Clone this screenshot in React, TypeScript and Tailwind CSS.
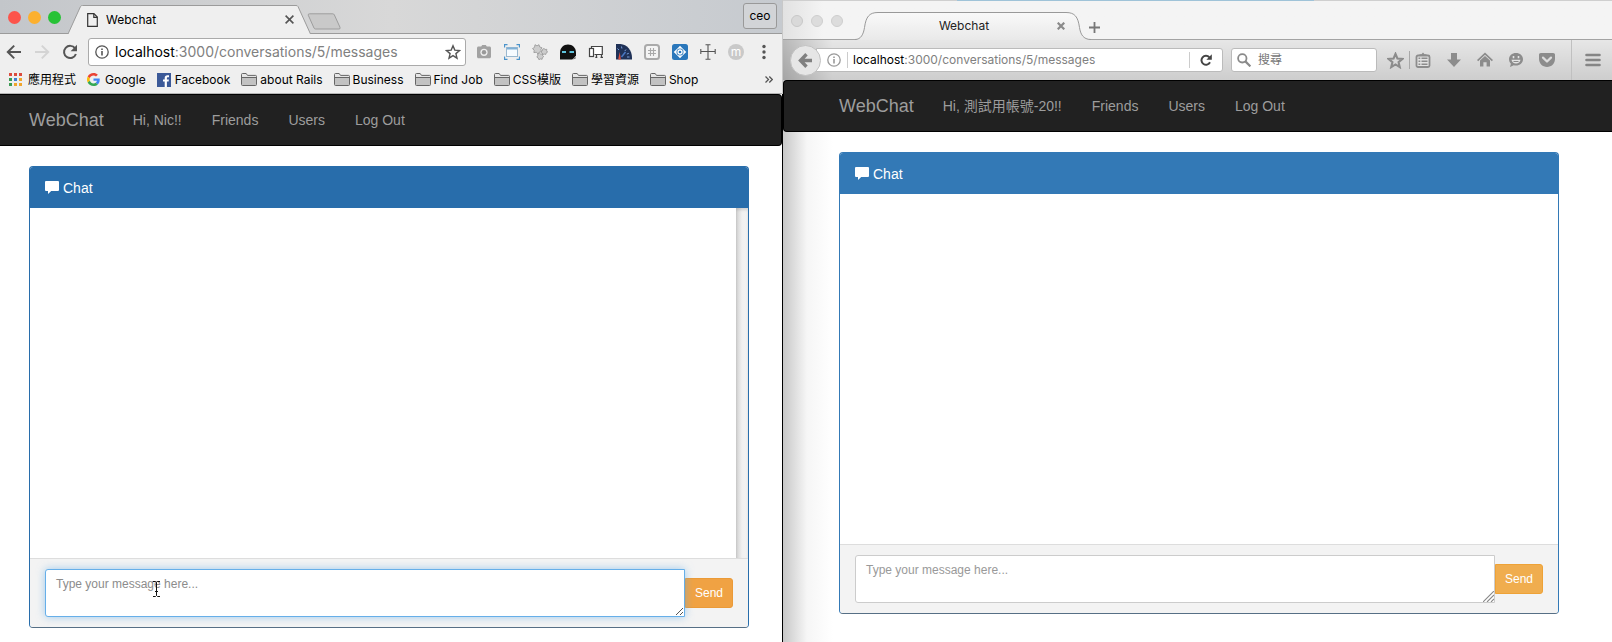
import React from "react";

type IconProps = { className?: string };

/* ---------- Chrome icons ---------- */

const PageIcon = () => (
  <svg className="h-[14px] w-[11px]" viewBox="0 0 11 14" fill="none" stroke="#333" strokeWidth="1.2">
    <path d="M.7.7h6.2l3.4 3.4v9.2H.7z" />
    <path d="M6.8.8v3.5h3.4" />
  </svg>
);

const ArrowLeft = () => (
  <svg className="h-4 w-4" viewBox="0 0 16 16" fill="none" stroke="#555" strokeWidth="2">
    <path d="M15 8H2.2M8.2 1.6 1.8 8l6.4 6.4" />
  </svg>
);

const ArrowRight = () => (
  <svg className="h-4 w-4" viewBox="0 0 16 16" fill="none" stroke="#d4d4d4" strokeWidth="2">
    <path d="M1 8h12.8M7.8 1.6 14.2 8l-6.4 6.4" />
  </svg>
);

const ChromeReload = () => (
  <svg className="h-4 w-4" viewBox="0 0 16 16">
    <path d="M13.1 4.4A6.1 6.1 0 1 0 13.9 10" fill="none" stroke="#555" strokeWidth="2" />
    <path d="M15 .8v6.4H8.6z" fill="#555" />
  </svg>
);

const InfoIcon = ({ className }: IconProps) => (
  <svg className={className} viewBox="0 0 14 14" fill="none" stroke="currentColor">
    <circle cx="7" cy="7" r="6.2" strokeWidth="1.3" />
    <path d="M7 6v4.4M7 3.4v1.5" strokeWidth="1.6" />
  </svg>
);

const StarIcon = ({ className }: IconProps) => (
  <svg className={className} viewBox="0 0 16 16" fill="none" stroke="currentColor" strokeLinejoin="miter">
    <path d="m8 1.8 1.8 4.3 4.7.4-3.6 3.1 1.1 4.6L8 11.7l-4 2.5 1.1-4.6L1.500 6.500l4.700-.4z" />
  </svg>
);

const CameraIcon = () => (
  <svg className="h-4 w-4" viewBox="0 0 16 16">
    <path d="M5.200 2.400 6.200 1h3.600l1 1.400h2.700c.8 0 1.500.7 1.500 1.500v8.800c0 .8-.7 1.500-1.500 1.500h-11c-.8 0-1.500-.7-1.500-1.500V3.900c0-.8.7-1.500 1.500-1.500z" fill="#a2a2a2" />
    <circle cx="8" cy="8.300" r="3.600" fill="#eee" />
    <circle cx="8" cy="8.300" r="2.200" fill="#999" />
  </svg>
);

const ResizeIcon = () => (
  <svg className="h-4 w-4" viewBox="0 0 16 16" fill="none">
    <rect x="2.500" y="3.500" width="11" height="9" fill="#f6fbff" stroke="#9ab8cf" />
    <path d="M3 4.500h10" stroke="#7fb0d6" strokeWidth="2" />
    <path d="M.5 3.500v-3h3M12.500.5h3v3M15.500 12.500v3h-3M3.500 15.500h-3v-3" stroke="#4a93cb" strokeWidth="1.300" />
  </svg>
);

const GearsIcon = () => (
  <svg className="h-4 w-4" viewBox="0 0 16 16" fill="#cdcdcd" stroke="#9c9c9c" strokeWidth=".9">
    <path d="M3 .7 5 1.900 7 .7l.6 2.200 2.300.8-1.100 2 1 2.100-2.400.2L6 10 4.400 8.200 1.900 8.600l.3-2.400L.5 4.600l2-1.200z" />
    <path d="m12 4.500 1.100 1 1.700-.2-.2 1.600 1 1.200-1.400.8-.5 1.600-1.500-.5-1.500.6-.4-1.600-1.200-1 1.200-1.100.1-1.600z" />
    <path d="m7.500 9.200 1.300 1 1.700-.4v1.700l1.300 1.100-1.400 1-.3 1.700-1.700-.4-1.500.8-.6-1.600-1.500-1 1-1.300-.1-1.700z" />
  </svg>
);

const MaskIcon = () => (
  <svg className="h-4 w-4" viewBox="0 0 16 16">
    <path d="M0 15.500V9C0 3.500 3.500.5 8 .5S16 3.500 16 9v2.500c-1 1.500-2.500 3-4 4z" fill="#111" />
    <rect x="2" y="7" width="4" height="2" fill="#5fc4dd" />
    <rect x="9.500" y="7" width="4.500" height="2" fill="#5fc4dd" />
    <path d="m12.300 15.600 3.300-3v2.200z" fill="#777" />
  </svg>
);

const DevicesIcon = () => (
  <svg className="h-4 w-4" viewBox="0 0 16 16" fill="none" stroke="#444" strokeWidth="1.200">
    <path d="M3.500 4V2.500h10.800v8H6.500" fill="#fff" />
    <rect x="1.500" y="4.500" width="4" height="8" fill="#fff" />
    <path d="M8.500 11v2.500M13.500 11v2.500M7.300 13.300h2M12.500 13.300h2.500" />
  </svg>
);

const GaugeIcon = () => (
  <svg className="h-4 w-4" viewBox="0 0 16 16">
    <path d="M0 0h4.500C11 .3 16 6.500 16 13.500V15.500H0z" fill="#1f3157" />
    <path d="M1.500 4.500 3 6M5.500 2.500l.4 2M10 5.500 8.800 7M12.800 9.300l-2 .8M13.500 13H11" stroke="#7aa0dc" strokeWidth="1" />
    <path d="M9.500 8 5.500 13" stroke="#4a78c4" strokeWidth="1.500" />
    <path d="M2.200 15.500 3.700 8l1.200 7.500z" fill="#e2513f" />
  </svg>
);

const HashIcon = () => (
  <svg className="h-4 w-4" viewBox="0 0 16 16" fill="none" stroke="#aaa">
    <rect x="1" y="1" width="14" height="14" rx="2.500" fill="#f4f4f4" strokeWidth="2" />
    <path d="M6.500 4v8M9.500 4v8M4 6.500h8M4 9.500h8" strokeWidth="1.100" />
  </svg>
);

const EyeIcon = () => (
  <svg className="h-4 w-4" viewBox="0 0 16 16">
    <rect width="16" height="16" rx="2.500" fill="#2a77bb" />
    <path d="M8 1.800 10.600 4.600 14.300 8l-3.700 3.400L8 14.200l-2.600-2.800L1.700 8l3.700-3.400z" fill="#fff" />
    <circle cx="8" cy="8" r="3.500" fill="#2a77bb" />
    <circle cx="8" cy="8" r="2" fill="none" stroke="#fff" strokeWidth="1.300" />
  </svg>
);

const CrossIcon = () => (
  <svg className="h-4 w-4" viewBox="0 0 16 16" fill="none" stroke="#555" strokeWidth="1.100">
    <path d="M8 1v14M1 7.500h14M5.500.8h5M5.500 15.200h5M.8 5v5M15.200 5v5" />
  </svg>
);

const GoogleIcon = () => (
  <svg className="h-[13px] w-[13px]" viewBox="0 0 48 48">
    <path fill="#EA4335" d="M24 9.500c3.540 0 6.710 1.220 9.210 3.600l6.850-6.850C35.900 2.380 30.470 0 24 0 14.620 0 6.510 5.380 2.560 13.220l7.980 6.190C12.430 13.720 17.740 9.500 24 9.500z" />
    <path fill="#4285F4" d="M46.980 24.550c0-1.570-.15-3.090-.38-4.550H24v9.020h12.940c-.58 2.960-2.260 5.480-4.780 7.180l7.730 6c4.510-4.180 7.090-10.360 7.090-17.650z" />
    <path fill="#FBBC05" d="M10.530 28.590c-.48-1.450-.76-2.990-.76-4.590s.27-3.140.76-4.590l-7.980-6.190C.92 16.460 0 20.120 0 24s.92 7.540 2.560 10.780l7.970-6.190z" />
    <path fill="#34A853" d="M24 48c6.480 0 11.930-2.130 15.890-5.810l-7.730-6c-2.150 1.450-4.920 2.300-8.160 2.300-6.260 0-11.570-4.220-13.470-9.910l-7.980 6.190C6.510 42.620 14.620 48 24 48z" />
  </svg>
);

const FacebookIcon = () => (
  <svg className="h-[14px] w-[14px]" viewBox="0 0 14 14">
    <rect width="14" height="14" fill="#3b5998" />
    <path d="M7.700 14V8.500H6V6.400h1.700V4.900c0-1.900 1.100-2.700 2.800-2.700h1.500v2h-1c-.9 0-1.100.4-1.100 1v1.200h2L11.600 8.500H9.900V14z" fill="#fff" />
  </svg>
);

const FolderIcon = () => (
  <svg className="h-[13px] w-4" viewBox="0 0 16 13" fill="none" stroke="#666">
    <path d="M.5 11.500v-10q0-1 1-1h3.700l1.300 1.900h8q1 0 1 1v8.100q0 1-1 1h-13q-1 0-1-1z" fill="#e6e6e6" />
    <path d="M1 5h14v7H1z" fill="#c2c2c2" stroke="none" />
    <path d="M1 4.500h14" />
  </svg>
);

const appColors = ["#dc4b3e", "#dc4b3e", "#dc4b3e", "#3c9b54", "#3f7fd0", "#f0a52c", "#3c9b54", "#f0a52c", "#f0a52c"];
const AppsIcon = () => (
  <svg className="h-[13px] w-[13px]" viewBox="0 0 13 13">
    {appColors.map((c, i) => (
      <rect key={i} x={(i % 3) * 5} y={Math.floor(i / 3) * 5} width="3" height="3" fill={c} />
    ))}
  </svg>
);

/* ---------- Firefox icons ---------- */

const FxBack = () => (
  <svg className="h-[15px] w-[15px]" viewBox="0 0 15 15" fill="none" stroke="#808080" strokeWidth="3.400">
    <path d="M14 7.500H3M8.500 1.300 2.500 7.500l6 6.200" />
  </svg>
);
const FxReload = () => (
  <svg className="h-3 w-3" viewBox="0 0 12 12">
    <path d="M9.300 3.200A4.500 4.500 0 1 0 10 8.300" fill="none" stroke="#444" strokeWidth="2" />
    <path d="M11.800.3v5.400H6.400z" fill="#444" />
  </svg>
);
const FxSearch = () => (
  <svg className="h-[14px] w-[14px] shrink-0" viewBox="0 0 14 14" fill="none" stroke="#8a8a8a">
    <circle cx="5.300" cy="5.300" r="4.200" strokeWidth="1.800" />
    <path d="m8.400 8.400 5 5" strokeWidth="2.200" />
  </svg>
);
const FxList = () => (
  <svg className="h-4 w-4" viewBox="0 0 16 16">
    <path d="M4.500 3.500V2.200h2L8 .5l1.500 1.700h2v1.300z" fill="#8c8c8c" />
    <rect x="1.500" y="3.500" width="13" height="11.500" rx="1.500" fill="#e2e2e2" stroke="#8c8c8c" strokeWidth="1.800" />
    <path d="M3.500 6.300h1.800M3.500 9.200h1.800M3.500 12.200h1.800M6.500 6.300h6M6.500 9.200h6M6.500 12.200h6" stroke="#8c8c8c" strokeWidth="1.500" />
  </svg>
);
const FxDownload = () => (
  <svg className="h-4 w-4" viewBox="0 0 16 16" fill="#8c8c8c">
    <path d="M5 1h6v6.500h4L8 15 1 7.500h4z" />
  </svg>
);
const FxHome = () => (
  <svg className="h-4 w-4" viewBox="0 0 16 16">
    <path d="M.6 8.700 8 1.700l7.400 7" fill="none" stroke="#8c8c8c" strokeWidth="1.700" />
    <path d="M3 8.500 8 4l5 4.500v6H9.600v-4.200H6.400v4.200H3z" fill="#8c8c8c" />
  </svg>
);
const FxSmile = () => (
  <svg className="h-4 w-4" viewBox="0 0 16 16">
    <path d="M8 1c4 0 7 2.700 7 6.300s-3 6.300-7 6.300c-.8 0-1.500-.1-2.200-.3L2 15l.9-3.200C1.700 10.700 1 9.100 1 7.300 1 3.700 4 1 8 1z" fill="#8c8c8c" />
    <path d="M5.500 4v2.300M10.500 4v2.300" stroke="#e4e4e4" strokeWidth="1.600" />
    <path d="M3.500 7.800h9c-.3 2.300-2.200 3.700-4.500 3.700S3.800 10.100 3.500 7.800z" fill="#e4e4e4" />
    <path d="M5.500 9.500h5" stroke="#8c8c8c" strokeWidth="1" />
  </svg>
);
const FxPocket = () => (
  <svg className="h-4 w-4" viewBox="0 0 16 16">
    <path d="M1.800 1h12.400c1 0 1.800.8 1.800 1.800V7c0 4.400-3.600 8-8 8S0 11.400 0 7V2.800C0 1.800.8 1 1.800 1z" fill="#8c8c8c" />
    <path d="m4 5.600 4 3.900 4-3.900" fill="none" stroke="#ddd" strokeWidth="2.200" strokeLinecap="round" strokeLinejoin="round" />
  </svg>
);
const FxMenu = () => (
  <svg className="h-[14px] w-4" viewBox="0 0 16 14" stroke="#858585" strokeWidth="2.600" strokeLinecap="round">
    <path d="M1.500 2h13M1.500 7h13M1.500 12h13" />
  </svg>
);

/* ---------- Web page inside each browser ---------- */

const CommentIcon = () => (
  <svg className="h-[13px] w-[14px]" viewBox="0 0 14 13" fill="#fff">
    <path d="M1 0h12q1 0 1 1v8q0 1-1 1H6.200L3 13v-3H1q-1 0-1-1V1q0-1 1-1z" />
  </svg>
);

const IBeam = () => (
  <svg className="pointer-events-none absolute top-3 left-[108px] h-4 w-[7px]" viewBox="0 0 7 16" fill="none" stroke="#111" strokeWidth="1">
    <path d="M0 .5h2.500l1 1 1-1H7M3.500 1.500v13M0 15.500h2.500l1-1 1 1H7M2 10.500h3" />
  </svg>
);

function Navbar({ greeting, className }: { greeting: string; className: string }) {
  return (
    <nav className={`flex h-[52px] items-center border-y border-black bg-[#212121] text-sm text-[#9d9d9d] ${className}`}>
      <a href="#home" className="pr-[29px] text-lg">WebChat</a>
      <ul className="flex gap-[30px] whitespace-nowrap">
        {[greeting, "Friends", "Users", "Log Out"].map((t) => (
          <li key={t}><a href="#nav">{t}</a></li>
        ))}
      </ul>
    </nav>
  );
}

function ChatPanel({ focused }: { focused: boolean }) {
  const id = focused ? "message-a" : "message-b";
  return (
    <section className={`overflow-hidden rounded border border-b-[#566f85] ${focused ? "border-x-[#286dab] border-t-[#286dab]" : "border-x-[#3379b6] border-t-[#3379b6]"}`}>
      <h2 className={`flex h-[41px] items-center gap-1 px-[15px] text-sm text-white ${focused ? "bg-[#286dab]" : "bg-[#3379b6]"}`}>
        <CommentIcon />
        <span>Chat</span>
      </h2>
      <div className="flex h-[350px] justify-end bg-white">
        {focused && <div className="w-3 bg-linear-to-r from-[#d2d2d2] via-[#f0f0f0] to-[#f4f4f4] shadow-[inset_0_2px_3px_#0002]" />}
      </div>
      <form className="flex items-center border-t border-[#ddd] bg-[#f3f3f3] px-[15px] py-[10px]" onSubmit={(e) => e.preventDefault()}>
        <div className="relative z-10 flex grow">
          <textarea
            id={id}
            aria-label="Message"
            rows={2}
            placeholder="Type your message here..."
            className={`h-12 w-full resize-none rounded-l-[3px] border bg-white px-[10px] py-[5px] text-xs leading-[18px] outline-none ${
              focused
                ? "border-[#66afe9] shadow-[0_0_8px_#66afe999] placeholder:text-[#8c8c8c]"
                : "border-[#ccc] placeholder:text-[#999]"
            }`}
          />
          {focused ? (
            <svg className="absolute right-[2px] bottom-[2px] h-[7px] w-[7px]" viewBox="0 0 7 7" stroke="#555" strokeWidth="1">
              <path d="M0 7 7 0M4 7l3-3" />
            </svg>
          ) : (
            <svg className="absolute right-px bottom-px h-[11px] w-[11px]" viewBox="0 0 11 11" stroke="#888" strokeWidth="1.100">
              <path d="M0 11 11 0M4 11l7-7M8 11l3-3" />
            </svg>
          )}
          {focused && <IBeam />}
        </div>
        <button
          type="submit"
          className={`h-[30px] rounded-r-[3px] border px-[9px] text-xs text-white ${
            focused ? "border-[#eb9a37] bg-[#f0a243]" : "border-[#eea236] bg-[#f0ad4e]"
          }`}
        >
          Send
        </button>
      </form>
    </section>
  );
}

function Url() {
  return (
    <span className="grow truncate text-[#808080]">
      <span className="text-black">localhost</span>:3000/conversations/5/messages
    </span>
  );
}

/* ---------- Chrome window ---------- */

const extensions = [
  ["Camera", CameraIcon],
  ["Resizer", ResizeIcon],
  ["Gears", GearsIcon],
  ["Mask", MaskIcon],
  ["Devices", DevicesIcon],
  ["Speed", GaugeIcon],
  ["Grid", HashIcon],
  ["Viewer", EyeIcon],
  ["Ruler", CrossIcon],
] as const;

const folders = ["about Rails", "Business", "Find Job", "CSS模版", "學習資源", "Shop"];

function ChromeWindow() {
  return (
    <div className="flex min-w-0 flex-col bg-white">
      <header className="bg-[#efefef] font-[Inter,'Noto_Sans_CJK_TC',sans-serif]">
        <div className="flex h-[34px] items-end bg-linear-to-r from-[#c3c6ca] via-[#d8d8d8] via-50% to-[#c6cacf] shadow-[inset_0_-1px_0_#9b9b9b]">
          <div className="flex h-full w-[68px] items-center gap-[7px] pl-2">
            <span className="h-[13px] w-[13px] rounded-full bg-[#fc544b]" />
            <span className="h-[13px] w-[13px] rounded-full bg-[#fcb02f]" />
            <span className="h-[13px] w-[13px] rounded-full bg-[#27c236]" />
          </div>
          <div className="relative flex h-[29px] w-[243px] items-center gap-2 pr-[17px] pl-[19px] text-xs">
            <svg className="absolute inset-0 h-full w-full" viewBox="0 0 243 29" preserveAspectRatio="none">
              <path d="M0 29 12.500 1.500Q13 .5 14.500.5H228Q229.500.5 230 1.500L242.500 29" fill="#efefef" stroke="#9b9b9b" />
            </svg>
            <span className="relative"><PageIcon /></span>
            <span className="relative grow">Webchat</span>
            <button aria-label="Close tab" className="relative">
              <svg className="h-[9px] w-[9px]" viewBox="0 0 9 9" stroke="#555" strokeWidth="1.600"><path d="m.6.6 7.800 7.800M8.400.6.6 8.400" /></svg>
            </button>
          </div>
          <button aria-label="New tab" className="mb-1 -ml-1">
            <svg className="h-[17px] w-[34px]" viewBox="0 0 34 17"><path d="M2.500.8h23.300q1 0 1.500 1l5.700 12.500q.6 1.700-1 1.700H8.500q-1 0-1.500-1L1.300 2.300Q.8.800 2.500.8z" fill="#c9c9c9" stroke="#9d9d9d" /></svg>
          </button>
          <button className="mr-[5px] mb-[5px] ml-auto h-[26px] w-[34px] rounded-[3px] border border-[#999] bg-[#d2d4d7] text-xs">ceo</button>
        </div>
        <div className="flex h-9 items-center pr-[10px] pl-[6px] text-[#555]">
          <div className="flex w-[82px] gap-3">
            <button aria-label="Back"><ArrowLeft /></button>
            <button aria-label="Forward"><ArrowRight /></button>
            <button aria-label="Reload"><ChromeReload /></button>
          </div>
          <div className="flex h-[28px] min-w-0 grow items-center gap-[6px] rounded-[3px] border border-[#aaa] bg-white pr-1 pl-[6px] text-sm">
            <InfoIcon className="h-[14px] w-[14px] shrink-0" />
            <Url />
            <button aria-label="Bookmark this page"><StarIcon className="h-4 w-4 stroke-[1.4]" /></button>
          </div>
          <div className="ml-[10px] flex items-center gap-3">
            {extensions.map(([name, Icon]) => (
              <button key={name} aria-label={name}><Icon /></button>
            ))}
            <button className="h-4 w-4 rounded-full bg-[#c9c9c9] text-xs leading-[14px] text-white">m</button>
            <button aria-label="Menu" className="flex w-4 justify-center">
              <svg className="h-4 w-1" viewBox="0 0 4 16" fill="#555"><circle cx="2" cy="2.500" r="1.700" /><circle cx="2" cy="8" r="1.700" /><circle cx="2" cy="13.500" r="1.700" /></svg>
            </button>
          </div>
        </div>
        <div className="flex h-6 items-center gap-[11px] border-b border-[#b5b5b5] px-[9px] pb-1 text-xs whitespace-nowrap">
          <a href="#apps" className="flex items-center gap-[6px]"><AppsIcon />應用程式</a>
          <a href="#google" className="flex items-center gap-[5px]"><GoogleIcon />Google</a>
          <a href="#facebook" className="flex items-center gap-1"><FacebookIcon />Facebook</a>
          {folders.map((f) => (
            <a key={f} href="#folder" className="flex items-center gap-[3px]"><FolderIcon />{f}</a>
          ))}
          <button aria-label="More bookmarks" className="ml-auto">
            <svg className="h-[7px] w-2" viewBox="0 0 8 7" fill="none" stroke="#555" strokeWidth="1.300"><path d="m.5.5 3 3-3 3M4.300.5l3 3-3 3" /></svg>
          </button>
        </div>
      </header>
      <Navbar greeting="Hi, Nic!!" className="rounded-r border-r pl-[29px]" />
      <main className="pt-5 pr-[33px] pl-[29px]"><ChatPanel focused /></main>
    </div>
  );
}

/* ---------- Firefox window ---------- */

function FirefoxWindow() {
  return (
    <div className="flex min-w-0 flex-col bg-linear-to-r from-[#c8c8c8] via-[#f6f6f6] via-[24px] to-white to-[50px]">
      <header className="font-[Inter,'Noto_Sans_CJK_TC',sans-serif]">
        <div className="flex h-px bg-[#cfcfcf]">
          <div className="ml-[21%] w-[43%] bg-[#9fc3d8]" />
        </div>
        <div className="flex h-[39px] items-end bg-linear-to-r from-[#e2e2e2] to-[#f4f4f4] to-[40px] shadow-[inset_0_-1px_0_#a3a3a3]">
          <div className="flex h-full w-[72px] items-center gap-2 pl-2">
            <span className="h-3 w-3 rounded-full border border-[#c8c8c8] bg-[#d9d9d9]" />
            <span className="h-3 w-3 rounded-full border border-[#cecece] bg-[#dcdcdc]" />
            <span className="h-3 w-3 rounded-full border border-[#cecece] bg-[#dcdcdc]" />
          </div>
          <div className="relative flex h-[29px] w-[236px] items-center justify-center pr-[18px] text-xs text-[#222]">
            <svg className="absolute inset-0 h-full w-full" viewBox="0 0 236 29" preserveAspectRatio="none">
              <defs>
                <linearGradient id="fxtab" x1="0" y1="0" x2="0" y2="1"><stop offset="0" stopColor="#f9f9f9" /><stop offset="1" stopColor="#e9e9e9" /></linearGradient>
              </defs>
              <path d="M0 28.500C6 28.500 8.500 23 9.500 16.500 11 6 14 1.500 23 1.500H211c9 0 12 4.500 13.500 15C225.500 23 228 28.500 236 28.500V29H0z" fill="url(#fxtab)" />
              <path d="M0 28.500C6 28.500 8.500 23 9.500 16.500 11 6 14 1.500 23 1.500H211c9 0 12 4.500 13.500 15C225.500 23 228 28.500 236 28.500" fill="none" stroke="#999" />
            </svg>
            <span className="relative">Webchat</span>
            <button aria-label="Close tab" className="absolute top-[11px] right-[26px]">
              <svg className="h-2 w-2" viewBox="0 0 8 8" stroke="#8a8a8a" strokeWidth="2.200"><path d="m.7.7 6.600 6.600M7.300.7.7 7.300" /></svg>
            </button>
          </div>
          <button aria-label="New tab" className="mb-[7px] ml-[-2px]">
            <svg className="h-[11px] w-[11px]" viewBox="0 0 11 11" stroke="#777" strokeWidth="1.800"><path d="M5.500 0v11M0 5.500h11" /></svg>
          </button>
        </div>
        <div className="bg-[#f8f8f8]">
          <div className="bg-linear-to-r from-[#0003] to-transparent to-[50px]">
            <div className="flex h-10 items-center bg-linear-to-b from-[#00000012] to-[#0000002c] pl-[7px] text-xs">
              <button aria-label="Back" className="z-10 flex h-[31px] w-[31px] shrink-0 items-center justify-center rounded-full border border-[#c2c2c2] bg-[#e6e6e6]"><FxBack /></button>
              <div className="-ml-[5px] flex h-6 min-w-0 grow items-center rounded-r-[3px] border border-[#bbb] bg-white pl-[10px]">
                <InfoIcon className="h-[14px] w-[14px] shrink-0 text-[#999]" />
                <span className="mr-[5px] ml-[6px] h-4 w-px bg-[#ccc]" />
                <Url />
                <span className="h-4 w-px bg-[#ccc]" />
                <button aria-label="Reload" className="px-[10px]"><FxReload /></button>
              </div>
              <label className="ml-2 flex h-6 w-[146px] items-center gap-[7px] rounded-[3px] border border-[#bbb] bg-white px-[5px]">
                <FxSearch />
                <input aria-label="Search" placeholder="搜尋" className="w-full min-w-0 outline-none placeholder:text-[#777]" />
              </label>
              <button aria-label="Bookmark" className="ml-[10px] text-[#8c8c8c]"><StarIcon className="h-[17px] w-[17px] stroke-2" /></button>
              <span className="mr-[5px] ml-[5px] h-[18px] w-px bg-[#a8a8a8]" />
              <div className="flex gap-[15px]">
                <button aria-label="Bookmarks list"><FxList /></button>
                <button aria-label="Downloads"><FxDownload /></button>
                <button aria-label="Home"><FxHome /></button>
                <button aria-label="Chat"><FxSmile /></button>
                <button aria-label="Pocket"><FxPocket /></button>
              </div>
              <span className="mr-[13px] ml-4 h-full w-px bg-[#c0c0c0]" />
              <button aria-label="Menu" className="mr-[11px]"><FxMenu /></button>
            </div>
          </div>
        </div>
      </header>
      <Navbar greeting="Hi, 測試用帳號-20!!" className="rounded-l border-l pl-[55px]" />
      <main className="pt-5 pr-[53px] pl-[56px]"><ChatPanel focused={false} /></main>
    </div>
  );
}

export default function App() {
  return (
    <div className="grid min-h-screen grid-cols-[782fr_1px_829fr] font-['Liberation_Sans','Noto_Sans_CJK_TC',sans-serif] text-black">
      <ChromeWindow />
      <div className="bg-linear-to-b from-[#c8c8c8] from-[94px] to-black to-[94px]" />
      <FirefoxWindow />
    </div>
  );
}
